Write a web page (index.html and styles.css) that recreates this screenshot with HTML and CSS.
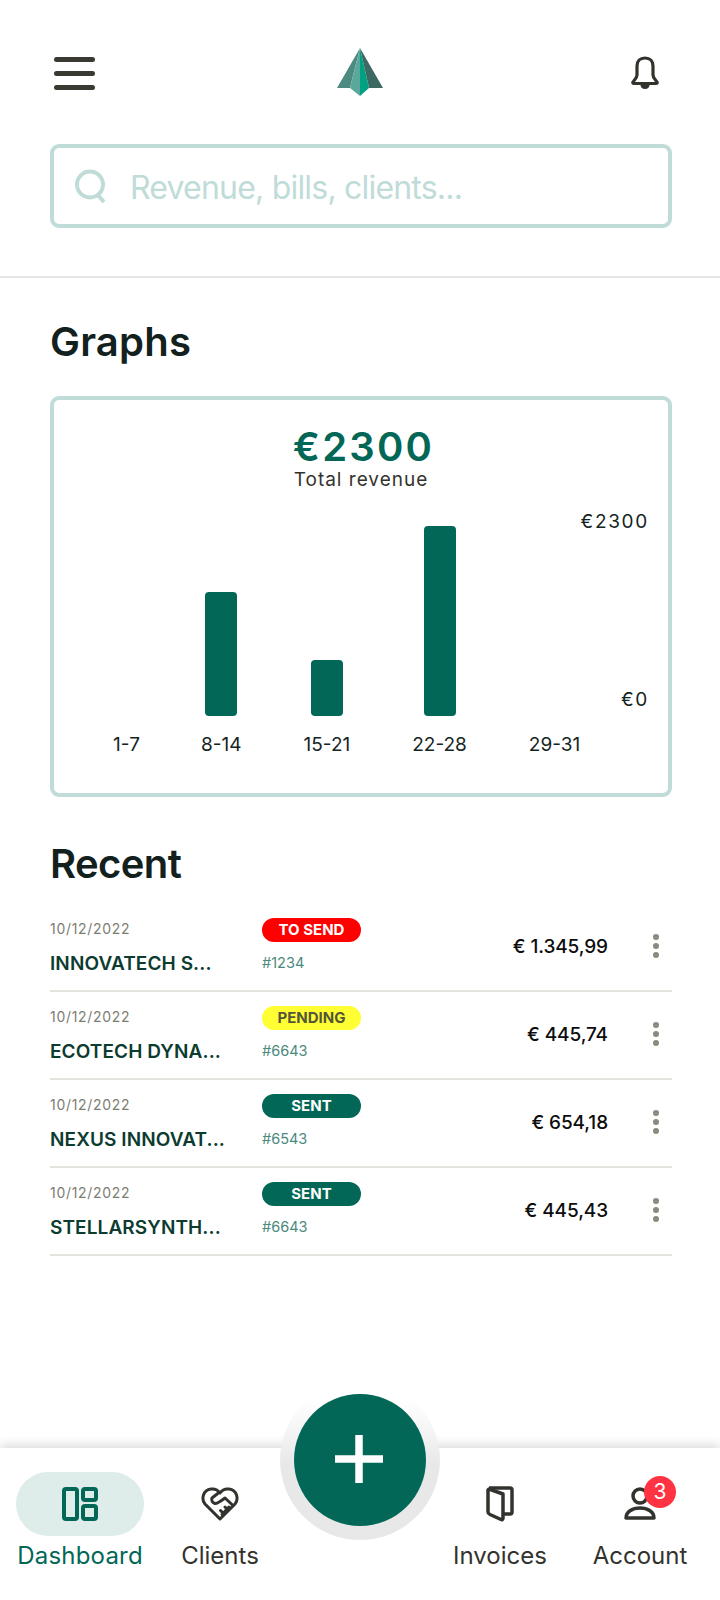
FILE: index.html
```html
<!DOCTYPE html>
<html lang="en">
<head>
    <meta charset="UTF-8">
    <meta name="viewport" content="width=device-width, initial-scale=1.0">
    <title>Dashboard</title>
    <link rel="stylesheet" href="styles.css">
</head>
<body>
    <header class="top">
        <div class="top-bar">
            <svg class="menu-icon" width="44" height="34" viewBox="0 0 44 34">
                <path d="M4.500 3.500H40.500M4.500 17.500H40.500M4.500 31.500H40.500" fill="none" stroke="#3a3a33" stroke-width="5" stroke-linecap="round"/>
            </svg>
            <svg class="logo" width="46" height="48" viewBox="0 0 46 48">
                <polygon points="23,0 0,40 13,40" fill="#4d8a7f"/>
                <polygon points="23,0 13,40 23,48" fill="#5aa89c"/>
                <polygon points="23,0 23,48 32,40" fill="#00a083"/>
                <polygon points="23,0 32,40 46,40" fill="#3c6a62"/>
            </svg>
            <svg class="bell-icon" width="28" height="33" viewBox="0 0 28 33">
                <path d="M14 2C9 2 6 5 6 10V19C6 22 3 24 2 26C1.500 27 2 27.500 3 27.500H25C26 27.500 26.500 27 26 26C25 24 22 22 22 19V10C22 5 19 2 14 2Z" fill="none" stroke="#33332e" stroke-width="3.200" stroke-linejoin="round"/>
                <path d="M9.500 29H18.500C18.500 31 17 33 14 33C11 33 9.500 31 9.500 29Z" fill="#33332e"/>
            </svg>
        </div>
        <div class="search">
            <svg width="34" height="34" viewBox="0 0 34 34">
                <circle cx="16" cy="15.500" r="13" fill="none" stroke="#bfdcd8" stroke-width="4"/>
                <path d="M23 25L30 33" fill="none" stroke="#bfdcd8" stroke-width="4"/>
            </svg>
            <span class="search-text">Revenue, bills, clients...</span>
        </div>
    </header>

    <main class="content">
        <h2 class="section-title graphs-title">Graphs</h2>
        <section class="card">
            <div class="total">€2300</div>
            <div class="total-label">Total revenue</div>
            <div class="plot">
                <div class="cols">
                    <div class="col"><div class="bar" style="height: 0"></div><span>1-7</span></div>
                    <div class="col"><div class="bar" style="height: 124px"></div><span>8-14</span></div>
                    <div class="col"><div class="bar" style="height: 56px"></div><span>15-21</span></div>
                    <div class="col"><div class="bar" style="height: 190px"></div><span>22-28</span></div>
                    <div class="col"><div class="bar" style="height: 0"></div><span>29-31</span></div>
                </div>
                <div class="y-axis">
                    <span>€2300</span>
                    <span>€0</span>
                </div>
            </div>
        </section>

        <h2 class="section-title recent-title">Recent</h2>
        <div class="rows">
            <div class="row">
                <div class="who"><span class="date">10/12/2022</span><span class="name">INNOVATECH S...</span></div>
                <div class="state"><span class="pill pill-red">TO SEND</span><span class="ref">#1234</span></div>
                <div class="amount">€ 1.345,99</div>
                <div class="more"><i></i><i></i><i></i></div>
            </div>
            <div class="row">
                <div class="who"><span class="date">10/12/2022</span><span class="name">ECOTECH DYNA...</span></div>
                <div class="state"><span class="pill pill-yellow">PENDING</span><span class="ref">#6643</span></div>
                <div class="amount">€ 445,74</div>
                <div class="more"><i></i><i></i><i></i></div>
            </div>
            <div class="row">
                <div class="who"><span class="date">10/12/2022</span><span class="name">NEXUS INNOVAT...</span></div>
                <div class="state"><span class="pill pill-green">SENT</span><span class="ref">#6543</span></div>
                <div class="amount">€ 654,18</div>
                <div class="more"><i></i><i></i><i></i></div>
            </div>
            <div class="row">
                <div class="who"><span class="date">10/12/2022</span><span class="name">STELLARSYNTH...</span></div>
                <div class="state"><span class="pill pill-green">SENT</span><span class="ref">#6643</span></div>
                <div class="amount">€ 445,43</div>
                <div class="more"><i></i><i></i><i></i></div>
            </div>
        </div>
    </main>

    <nav class="nav">
        <div class="fab-ring">
            <div class="fab">
                <svg class="plus" width="48" height="48" viewBox="0 0 48 48">
                    <path d="M24 0V48M0 24H48" stroke="#fff" stroke-width="7.500" fill="none"/>
                </svg>
            </div>
        </div>
        <div class="nav-item active">
            <div class="nav-icon">
                <svg width="36" height="34" viewBox="0 0 36 34" fill="none" stroke="#026756" stroke-width="4">
                    <rect x="2" y="2" width="13" height="30" rx="2"/>
                    <rect x="21" y="2" width="13" height="11" rx="2"/>
                    <rect x="21" y="19" width="13" height="13" rx="2"/>
                </svg>
            </div>
            <span>Dashboard</span>
        </div>
        <div class="nav-item">
            <div class="nav-icon">
                <svg width="38" height="34" viewBox="0 0 38 34" fill="none" stroke="#33332e" stroke-width="3" stroke-linejoin="round" stroke-linecap="round">
                    <path d="M19 32L4 17C0 12 2 3 10 2C14 1.500 17 3 19 6C21 3 24 1.500 28 2C36 3 38 12 34 17Z"/>
                    <path d="M18 5.500L11 11C10 13 11 15.500 14 16.500C16 17 20 14 24 11L32 18.500"/>
                    <path d="M28 20L21 27.500M24 20L27 23M19.500 23.500L22.500 26.500"/>
                </svg>
            </div>
            <span>Clients</span>
        </div>
        <div class="nav-item"></div>
        <div class="nav-item">
            <div class="nav-icon">
                <svg width="28" height="36" viewBox="0 0 28 36" fill="none" stroke="#33332e" stroke-width="3.500" stroke-linejoin="round">
                    <path d="M3 2H24C25.500 2 26 2.500 26 4V26C26 27.500 25.500 28 24 28H17"/>
                    <path d="M3 3L17 8V32C17 33.500 16 34 15 33.500L4 28.500C3 28 2 27.500 2 26V4Z"/>
                </svg>
            </div>
            <span>Invoices</span>
        </div>
        <div class="nav-item">
            <div class="nav-icon">
                <svg width="32" height="34" viewBox="0 0 32 34" fill="none" stroke="#33332e" stroke-width="3.500">
                    <circle cx="16" cy="9" r="7"/>
                    <path d="M2 31C2 25 8 21 16 21C24 21 30 25 30 31Z" stroke-linejoin="round"/>
                </svg>
                <span class="badge">3</span>
            </div>
            <span>Account</span>
        </div>
    </nav>
</body>
</html>
```

FILE: styles.css
```css
* {
    box-sizing: border-box;
}

body {
    margin: 0;
    width: 720px;
    height: 1600px;
    display: flex;
    flex-direction: column;
    background-color: #fff;
    font-family: Inter, "Liberation Sans", sans-serif;
    overflow: hidden;
}

.top {
    height: 278px;
    padding: 48px 48px 0 50px;
    border-bottom: 2px solid #e5e5e5;
}

.top-bar {
    display: flex;
    justify-content: space-between;
    height: 48px;
    padding-left: 2px;
    padding-right: 13px;
}

.menu-icon {
    margin-top: 8px;
}

.logo {
    margin-left: -8px;
}

.bell-icon {
    margin-top: 8px;
}

.search {
    display: flex;
    align-items: center;
    width: 622px;
    height: 84px;
    margin-top: 48px;
    padding: 0 20px;
    border: 4px solid #bfdcd8;
    border-radius: 9px;
}

.search-text {
    margin-left: 22px;
    padding-top: 2px;
    color: #bfdcd8;
    font-size: 32px;
    letter-spacing: -0.8px;
}

.content {
    flex: 1;
    padding: 0 48px 0 50px;
}

.section-title {
    margin: 40px 0 0;
    height: 48px;
    color: #12211e;
    font-size: 40px;
    line-height: 48px;
    font-weight: 600;
    letter-spacing: -0.6px;
}

.graphs-title {
    letter-spacing: 0.2px;
}

.recent-title {
    margin-top: 43px;
}

.card {
    width: 622px;
    height: 401px;
    margin-top: 30px;
    padding-top: 26px;
    border: 4px solid #bfdcd8;
    border-radius: 9px;
}

.total {
    height: 42px;
    padding-left: 5px;
    color: #026756;
    font-size: 40px;
    line-height: 42px;
    font-weight: 600;
    letter-spacing: 2.2px;
    text-align: center;
}

.total-label {
    height: 24px;
    color: #33332e;
    font-size: 19px;
    line-height: 24px;
    letter-spacing: 1px;
    text-align: center;
}

.plot {
    display: flex;
    margin-top: 18px;
    padding: 0 19px 0 60px;
}

.cols {
    display: flex;
    align-items: flex-end;
    gap: 62px;
    height: 247px;
}

.col {
    display: flex;
    flex-direction: column;
    align-items: center;
    color: #14241f;
    font-size: 19px;
    line-height: 24px;
    white-space: nowrap;
}

.col:first-child {
    width: 25px;
}

.col span {
    margin-top: 17px;
}

.bar {
    width: 32px;
    background-color: #026756;
    border-radius: 4px;
}

.y-axis {
    display: flex;
    flex-direction: column;
    flex-shrink: 0;
    justify-content: space-between;
    align-items: flex-end;
    height: 202px;
    margin-left: auto;
    color: #14241f;
    font-size: 19px;
    line-height: 24px;
    letter-spacing: 1.7px;
}

.rows {
    margin-top: 16px;
}

.row {
    display: flex;
    align-items: stretch;
    height: 88px;
    border-bottom: 2px solid #e4e4df;
}

.who {
    display: flex;
    flex-direction: column;
    width: 212px;
    padding-top: 15px;
}

.date {
    height: 20px;
    color: #7d7d72;
    font-size: 14px;
    line-height: 20px;
    letter-spacing: 0.7px;
}

.name {
    height: 24px;
    margin-top: 13px;
    color: #0c3b30;
    font-size: 19px;
    line-height: 24px;
    font-weight: 600;
    letter-spacing: 0.1px;
    white-space: nowrap;
}

.state {
    display: flex;
    flex-direction: column;
    width: 130px;
    padding-top: 14px;
}

.pill {
    width: 99px;
    height: 24px;
    border-radius: 12px;
    font-size: 15px;
    line-height: 24px;
    font-weight: 700;
    text-align: center;
}

.pill-red {
    background-color: #ff0000;
    color: #fff;
}

.pill-yellow {
    background-color: #ffff33;
    color: #55553a;
}

.pill-green {
    background-color: #026756;
    color: #fff;
}

.ref {
    height: 20px;
    margin-top: 11px;
    color: #4a8a7d;
    font-size: 14.5px;
    line-height: 20px;
}

.amount {
    flex: 1;
    padding-top: 30px;
    color: #0d0d0d;
    font-size: 19px;
    line-height: 26px;
    font-weight: 500;
    letter-spacing: -0.1px;
    text-align: right;
}

.more {
    display: flex;
    flex-direction: column;
    align-items: center;
    gap: 3px;
    width: 16px;
    margin-left: 40px;
    margin-right: 8px;
    padding-top: 30px;
}

.more i {
    width: 6px;
    height: 6px;
    border-radius: 50%;
    background-color: #8a8a7e;
}

.nav {
    position: relative;
    display: grid;
    grid-template-columns: repeat(5, 140px);
    height: 152px;
    padding: 24px 10px 0;
    background-color: #fff;
    box-shadow: 0 -3px 10px rgba(0, 0, 0, 0.15);
}

.nav-item {
    display: flex;
    flex-direction: column;
    align-items: center;
    color: #33332e;
    font-size: 24px;
    line-height: 30px;
}

.nav-icon {
    position: relative;
    display: flex;
    align-items: center;
    justify-content: center;
    width: 128px;
    height: 64px;
    margin-bottom: 5px;
    border-radius: 32px;
}

.active {
    color: #026756;
    letter-spacing: 0.2px;
}

.active .nav-icon {
    background-color: #deecea;
}

.badge {
    position: absolute;
    top: 4px;
    left: 68px;
    width: 32px;
    height: 32px;
    border-radius: 50%;
    background-color: #ff3341;
    color: #fff;
    font-size: 21px;
    line-height: 32px;
    text-align: center;
}

.fab-ring {
    position: absolute;
    top: -68px;
    left: 280px;
    display: flex;
    align-items: center;
    justify-content: center;
    width: 160px;
    height: 160px;
    border-radius: 50%;
    background: linear-gradient(to bottom, #fff 12%, #f3f3f3 36%, #e8e8e8 52%);
}

.fab {
    display: flex;
    align-items: center;
    justify-content: center;
    width: 132px;
    height: 132px;
    border-radius: 50%;
    background-color: #026756;
}

.plus {
    margin: 0 2px 3px 0;
}
```
